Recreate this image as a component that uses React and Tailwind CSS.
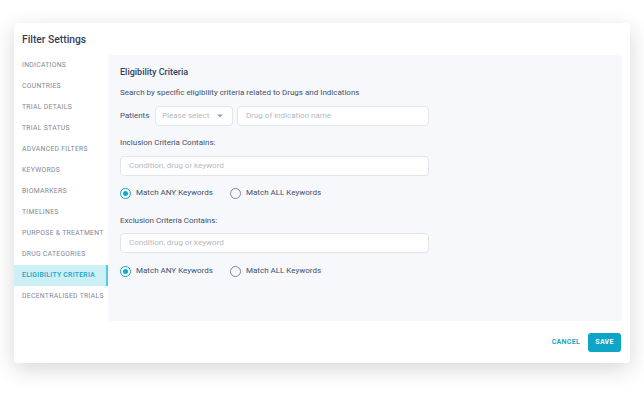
const navItems = [
  "INDICATIONS",
  "COUNTRIES",
  "TRIAL DETAILS",
  "TRIAL STATUS",
  "ADVANCED FILTERS",
  "KEYWORDS",
  "BIOMARKERS",
  "TIMELINES",
  "PURPOSE & TREATMENT",
  "DRUG CATEGORIES",
  "ELIGIBILITY CRITERIA",
  "DECENTRALISED TRIALS",
];

function Radio({ checked, label }) {
  return (
    <div className="flex items-center gap-[5px]">
      <span
        className={
          checked
            ? "w-[11px] h-[11px] rounded-full border-[1.5px] border-[#14a7c7] flex items-center justify-center"
            : "w-[11px] h-[11px] rounded-full border border-[#7f8897]"
        }
      >
        {checked && <span className="w-[5px] h-[5px] rounded-full bg-[#14a7c7]" />}
      </span>
      <span className="text-[8px] leading-[12px] text-[#44506a]">{label}</span>
    </div>
  );
}

function RadioRow() {
  return (
    <div className="flex items-center h-[12px]">
      <div className="w-[110px]">
        <Radio checked label="Match ANY Keywords" />
      </div>
      <Radio label="Match ALL Keywords" />
    </div>
  );
}

function TextBox({ placeholder, className }) {
  return (
    <div
      className={
        "h-[20px] bg-white border border-[#e2e6ec] rounded-[4px] flex items-center px-[8px] text-[8px] text-[#b3b9c3] " +
        className
      }
    >
      {placeholder}
    </div>
  );
}

export default function App() {
  return (
    <div
      className="w-[644px] h-[396px] bg-white pt-[23px] pl-[14px]"
      style={{ fontFamily: "Roboto, 'Liberation Sans', sans-serif" }}
    >
      <div className="w-[616px] h-[340px] bg-white rounded-[4px] shadow-[0_6px_22px_rgba(0,0,0,0.16)] flex flex-col">
        {/* header */}
        <div className="h-[32px] flex items-center pl-[8px] pt-[1px]">
          <span className="text-[10.3px] font-medium text-[#34405a]">Filter Settings</span>
        </div>

        {/* body */}
        <div className="flex h-[266px]">
          <div className="w-[94px] flex flex-col">
            {navItems.map((item) => {
              const active = item === "ELIGIBILITY CRITERIA";
              return (
                <div
                  key={item}
                  className={
                    active
                      ? "h-[21px] flex items-center pl-[8px] bg-[#cdeff6] border-r-2 border-[#5bc7de] text-[#15a6c6] text-[6.8px] font-medium tracking-[0.3px] whitespace-nowrap"
                      : "h-[21px] flex items-center pl-[8px] text-[#7f8898] text-[6.8px] tracking-[0.3px] whitespace-nowrap"
                  }
                >
                  {item}
                </div>
              );
            })}
          </div>

          <div className="w-[514px] bg-[#f6f8fb] rounded-tr-[3px] pl-[12px] pt-[12px] flex flex-col">
            <div className="text-[9px] leading-[10px] font-medium text-[#34405a]">Eligibility Criteria</div>
            <div className="mt-[11px] text-[8px] leading-[10px] text-[#44506a]">
              Search by specific eligibility criteria related to Drugs and Indications
            </div>

            <div className="mt-[8px] flex items-center gap-[5px]">
              <span className="text-[8px] text-[#44506a] w-[30px]">Patients</span>
              <div className="w-[78px] h-[20px] bg-white border border-[#e2e6ec] rounded-[4px] flex items-center justify-between pl-[6px] pr-[9px] text-[8px] text-[#b3b9c3]">
                <span>Please select</span>
                <svg width="6" height="4" viewBox="0 0 6 4">
                  <path d="M0 0.5h6L3 3.5z" fill="#9aa2ae" />
                </svg>
              </div>
              <TextBox placeholder="Drug of indication name" className="w-[192px] -ml-[1px]" />
            </div>

            <div className="mt-[12px] text-[8px] leading-[10px] text-[#44506a]">Inclusion Criteria Contains:</div>
            <TextBox placeholder="Condition, drug or keyword" className="mt-[8px] w-[309px]" />
            <div className="mt-[11px]">
              <RadioRow />
            </div>

            <div className="mt-[17px] text-[8px] leading-[10px] text-[#44506a]">Exclusion Criteria Contains:</div>
            <TextBox placeholder="Condition, drug or keyword" className="mt-[7px] w-[309px]" />
            <div className="mt-[12px]">
              <RadioRow />
            </div>
          </div>
        </div>

        {/* footer */}
        <div className="flex-1 flex items-center justify-end pr-[9px] gap-[8px]">
          <button className="text-[7px] font-bold text-[#14a7c7] tracking-[0.3px]">CANCEL</button>
          <button className="w-[33px] h-[19px] rounded-[3px] bg-[#0ea5c6] text-white text-[7px] font-bold tracking-[0.3px]">
            SAVE
          </button>
        </div>
      </div>
    </div>
  );
}
